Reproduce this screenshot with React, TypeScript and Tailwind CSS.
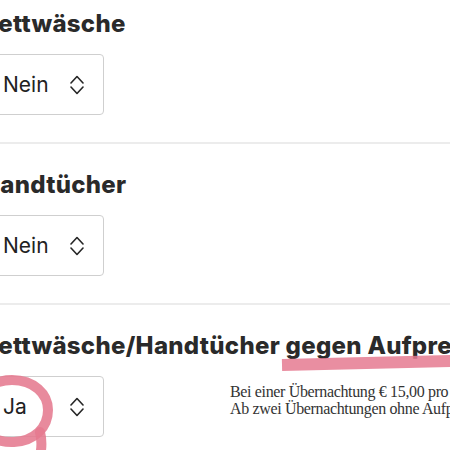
const headingFont = { fontFamily: "Inter, 'Liberation Sans', sans-serif" };

function UpDownIcon() {
  return (
    <svg width="14" height="20" viewBox="0 0 14 20" fill="none" stroke="#262626" strokeWidth="1.6" strokeLinecap="round" strokeLinejoin="round">
      <path d="M1 8 L7 1.5 L13 8" />
      <path d="M1 12 L7 18.5 L13 12" />
    </svg>
  );
}

function SelectBox({ value }: { value: string }) {
  return (
    <div className="flex h-[61px] w-[120px] shrink-0 items-center justify-between rounded-[4px] border border-[#cfcfcf] bg-white pl-[18px] pr-[19px]">
      <span className="text-[21px] leading-none text-[#222]" style={headingFont}>
        {value}
      </span>
      <UpDownIcon />
    </div>
  );
}

type SectionProps = {
  title: string;
  value: string;
  first?: boolean;
  last?: boolean;
  note?: string[];
};

function Section({ title, value, first, last, note }: SectionProps) {
  return (
    <div
      className={[
        first ? "pt-[10px]" : "pt-[27px]",
        last ? "" : "border-b-2 border-[#ececec] pb-[27px]",
      ].join(" ")}
    >
      <h2
        className="ml-[-2px] whitespace-nowrap text-[24px] font-extrabold leading-[28px] tracking-[0.3px] text-[#2a2a2a]"
        style={headingFont}
      >
        {title}
      </h2>
      <div className="mt-[16px] flex items-start gap-[126px]">
        <SelectBox value={value} />
        {note && (
          <div
            className="mt-[7px] whitespace-nowrap text-[16px] leading-[17px] tracking-[-0.35px] text-[#333]"
            style={{ fontFamily: "'Liberation Serif', serif" }}
          >
            {note.map((line) => (
              <p key={line}>{line}</p>
            ))}
          </div>
        )}
      </div>
    </div>
  );
}

export default function App() {
  return (
    <div className="relative h-[450px] w-[450px] overflow-hidden bg-white">
      <div className="ml-[-16px] w-[560px]">
        <Section first title="Bettwäsche" value="Nein" />
        <Section title="Handtücher" value="Nein" />
        <Section
          last
          title="Bettwäsche/Handtücher gegen Aufpreis"
          value="Ja"
          note={[
            "Bei einer Übernachtung € 15,00 pro Person.",
            "Ab zwei Übernachtungen ohne Aufpreis.",
          ]}
        />
      </div>

      {/* pen marks drawn over the screenshot */}
      <svg className="pointer-events-none absolute left-0 top-0" width="450" height="450" viewBox="0 0 450 450" fill="none">
        <path
          d="M282 365 C 330 364, 390 362, 455 361"
          stroke="#e57a90"
          strokeOpacity="0.85"
          strokeWidth="12"
          strokeLinecap="butt"
        />
        <path
          d="M12 380 C 34 380, 48 394, 48 410 C 48 428, 34 441, 14 442 C -8 443, -24 430, -24 411 C -24 393, -8 380, 12 380 Z"
          stroke="#e57a90"
          strokeOpacity="0.88"
          strokeWidth="10"
        />
        <path d="M40 432 C 42 440, 42 447, 40 456" stroke="#e57a90" strokeOpacity="0.88" strokeWidth="10" strokeLinecap="round" />
      </svg>
    </div>
  );
}
